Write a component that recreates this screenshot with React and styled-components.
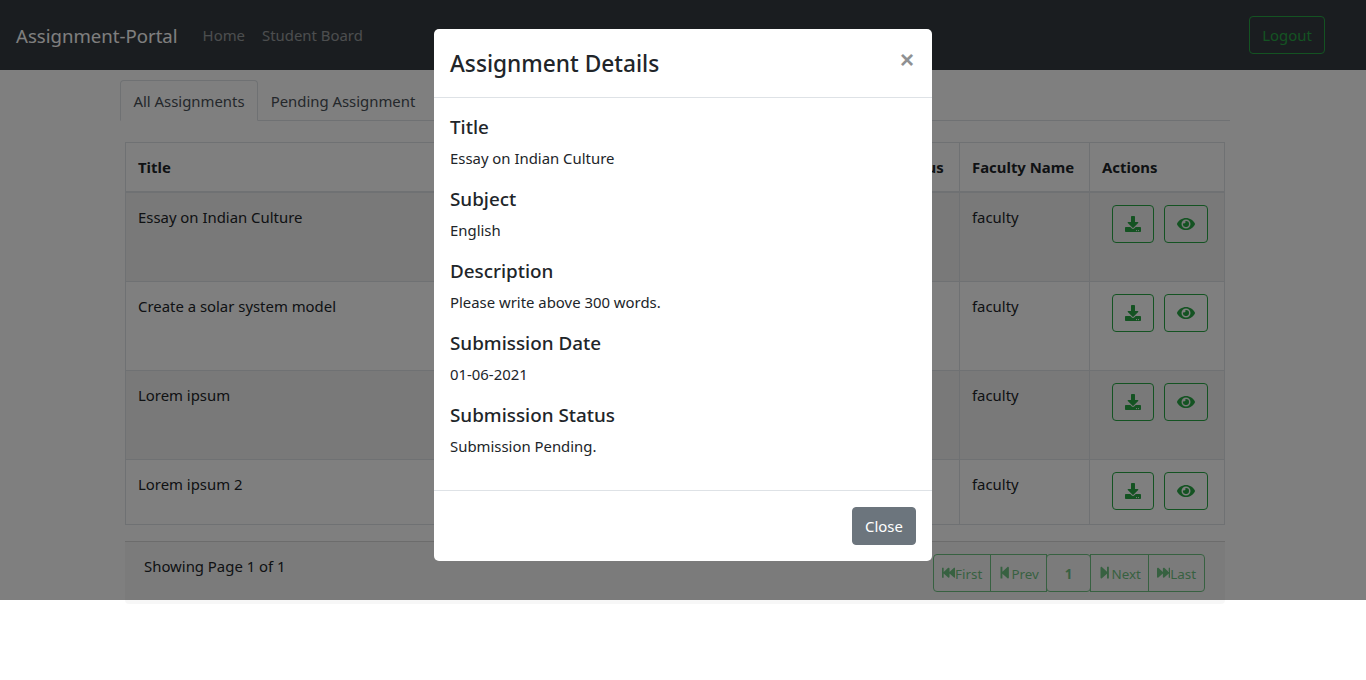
import React from "react";
import styled, { createGlobalStyle } from "styled-components";
import { FaDownload, FaEye, FaFastBackward, FaStepBackward, FaStepForward, FaFastForward } from "react-icons/fa";

const Global = createGlobalStyle`
  html, body { margin: 0; padding: 0; background: #fff; height: 680px; overflow: hidden; }
  body { font-family: "Noto Sans", "Open Sans", sans-serif; font-size: 14.9px; line-height: 24px; color: #212529; }
  * { box-sizing: border-box; }
`;

const Page = styled.div`position: relative; width: 1366px; height: 680px; overflow: hidden;`;

const Navbar = styled.nav`
  height: 70px; background: #343a40; display: flex; align-items: center; padding: 0 41px 0 16px;
`;
const Brand = styled.a`font-size: 18.6px; color: #fff; margin-right: 25px; line-height: 30px; padding-top: 1px;`;
const NavLink = styled.a`color: rgba(255,255,255,.5); margin-right: 17px; padding-bottom: 1px;`;
const Spacer = styled.div`flex: 1;`;
const Logout = styled.button`
  width: 76px; height: 38px; background: transparent; border: 1px solid #28a745; border-radius: 4px;
  color: #28a745; font: inherit; padding: 0;
`;

const Main = styled.main`width: 1110px; margin-left: 120px; padding-top: 10px;`;
const Tabs = styled.div`display: flex; height: 41px; border-bottom: 1px solid #dee2e6;`;
const Tab = styled.a`
  height: 41px; width: ${p => p.$w}px; text-align: center; line-height: 41px; color: #495057;
  border: 1px solid ${p => (p.$active ? "#dee2e6" : "transparent")}; border-bottom-color: ${p => (p.$active ? "#fff" : "transparent")};
  border-radius: 4px 4px 0 0; background: ${p => (p.$active ? "#fff" : "transparent")};
`;

const CardArea = styled.div`margin: 21px 5px 0;`;
const Table = styled.table`
  width: 1099px; table-layout: fixed; border-collapse: collapse; border: 1px solid #dee2e6; background: #fff;
`;
const Th = styled.th`
  height: 49px; padding: 0 12px; text-align: left; font-weight: 700; border: 1px solid #dee2e6; border-bottom: 2px solid #dee2e6;
  white-space: nowrap;
`;
const Tr = styled.tr`
  height: ${p => p.$h}px; background: ${p => (p.$odd ? "rgba(0,0,0,.05)" : "transparent")};
`;
const Td = styled.td`padding: 12px; vertical-align: top; border: 1px solid #dee2e6; color: #212529;`;
const Actions = styled.div`display: flex; gap: 10px; padding-left: 10px;`;
const IconBtn = styled.button`
  width: ${p => p.$w}px; height: 38px; padding: 0; background: transparent; border: 1px solid #28a745; border-radius: 4px;
  color: #28a745; display: flex; align-items: center; justify-content: center; font-size: 16px;
`;

const CardFooter = styled.div`
  margin-top: 16px; height: 63px; background: rgba(0,0,0,.03); border-top: 1px solid rgba(0,0,0,.125);
  border-radius: 0 0 4px 4px; padding: 12px 20px 12px 19px; display: flex; justify-content: space-between;
`;
const PageText = styled.span``;
const Pager = styled.div`display: flex; opacity: .65;`;
const PageBtn = styled.button`
  width: ${p => p.$w}px; height: 38px; margin-left: ${p => (p.$first ? 0 : -1)}px; padding: 0; background: transparent;
  border: 1px solid #28a745; border-radius: ${p => p.$r}; color: #28a745; display: flex; align-items: center; justify-content: center;
  font: inherit; font-size: 13.4px; font-weight: ${p => (p.$bold ? 700 : 400)};
`;
const PageLabel = styled.span`padding-top: 2px;`;

const Backdrop = styled.div`
  position: absolute; left: 0; top: 0; width: 100%; height: 600px; background: rgba(0,0,0,.5);
  display: flex; justify-content: center; padding-top: 29px; align-items: flex-start;
`;
const Modal = styled.div`
  width: 498px; height: 532px; background: #fff; border-radius: 5px; display: flex; flex-direction: column;
`;
const ModalHead = styled.header`
  height: 69px; border-bottom: 1px solid #dee2e6; padding: 0 16px; display: flex; align-items: center; justify-content: space-between; flex: none;
`;
const ModalTitle = styled.h4`margin: 0; font-size: 22.7px; font-weight: 500; line-height: 36px; color: #212529; padding-top: 1px;`;
const CloseX = styled.span`
  font-size: 24px; font-weight: 700; color: #212529; opacity: .5; line-height: 24px; margin: -6px 2px 0 0; font-family: "Liberation Sans", sans-serif;
`;
const ModalBody = styled.div`
  flex: 1; padding: 15px 16px 16px; display: flex; flex-direction: column; border-bottom: 1px solid #dee2e6;
`;
const Field = styled.section`height: 72px;`;
const Label = styled.h5`margin: 0; font-size: 18.85px; font-weight: 500; line-height: 28px; color: #212529;`;
const Value = styled.p`margin: 5px 0 0; line-height: 24px;`;
const ModalFoot = styled.footer`
  height: 70px; flex: none; padding: 16px; display: flex; justify-content: flex-end;
`;
const CloseBtn = styled.button`
  width: 64px; height: 38px; padding: 0; background: #6c757d; color: #fff; border: 1px solid #6c757d; border-radius: 4px; font: inherit;
`;

const rows = [
  ["Essay on Indian Culture", 90],
  ["Create a solar system model", 89],
  ["Lorem ipsum", 89],
  ["Lorem ipsum 2", 65],
];
const fields = [
  ["Title", "Essay on Indian Culture"],
  ["Subject", "English"],
  ["Description", "Please write above 300 words."],
  ["Submission Date", "01-06-2021"],
  ["Submission Status", "Submission Pending."],
];
const pager = [
  [58, FaFastBackward, "First", "4px 0 0 4px"],
  [57, FaStepBackward, "Prev", "0"],
  [45, null, "1", "4px"],
  [59, FaStepForward, "Next", "0"],
  [57, FaFastForward, "Last", "0 4px 4px 0"],
];

export default function App() {
  return (
    <Page>
      <Global />
      <Navbar>
        <Brand>Assignment-Portal</Brand>
        <NavLink>Home</NavLink>
        <NavLink>Student Board</NavLink>
        <Spacer />
        <Logout>Logout</Logout>
      </Navbar>
      <Main>
        <Tabs>
          <Tab $active $w={138}>All Assignments</Tab>
          <Tab $w={170}>Pending Assignment</Tab>
        </Tabs>
        <CardArea>
          <Table>
            <colgroup>
              <col style={{ width: 670 }} />
              <col style={{ width: 164 }} /><col style={{ width: 130 }} /><col style={{ width: 135 }} />
            </colgroup>
            <thead>
              <tr>
                <Th>Title</Th><Th>Submission Status</Th><Th>Faculty Name</Th><Th>Actions</Th>
              </tr>
            </thead>
            <tbody>
              {rows.map(([title, h], i) => (
                <Tr key={title} $odd={i % 2 === 0} $h={h}>
                  <Td>{title}</Td><Td /><Td>faculty</Td>
                  <Td>
                    <Actions>
                      <IconBtn $w={42}><FaDownload /></IconBtn>
                      <IconBtn $w={44}><FaEye size={18} /></IconBtn>
                    </Actions>
                  </Td>
                </Tr>
              ))}
            </tbody>
          </Table>
          <CardFooter>
            <PageText>Showing Page 1 of 1</PageText>
            <Pager>
              {pager.map(([w, Icon, label, r], i) => (
                <PageBtn key={label} $w={w} $r={r} $first={i === 0} $bold={!Icon}>
                  {Icon && <Icon />}<PageLabel>{label}</PageLabel>
                </PageBtn>
              ))}
            </Pager>
          </CardFooter>
        </CardArea>
      </Main>
      <Backdrop>
        <Modal>
          <ModalHead>
            <ModalTitle>Assignment Details</ModalTitle>
            <CloseX>×</CloseX>
          </ModalHead>
          <ModalBody>
            {fields.map(([k, v]) => (
              <Field key={k}>
                <Label>{k}</Label>
                <Value>{v}</Value>
              </Field>
            ))}
          </ModalBody>
          <ModalFoot><CloseBtn>Close</CloseBtn></ModalFoot>
        </Modal>
      </Backdrop>
    </Page>
  );
}
